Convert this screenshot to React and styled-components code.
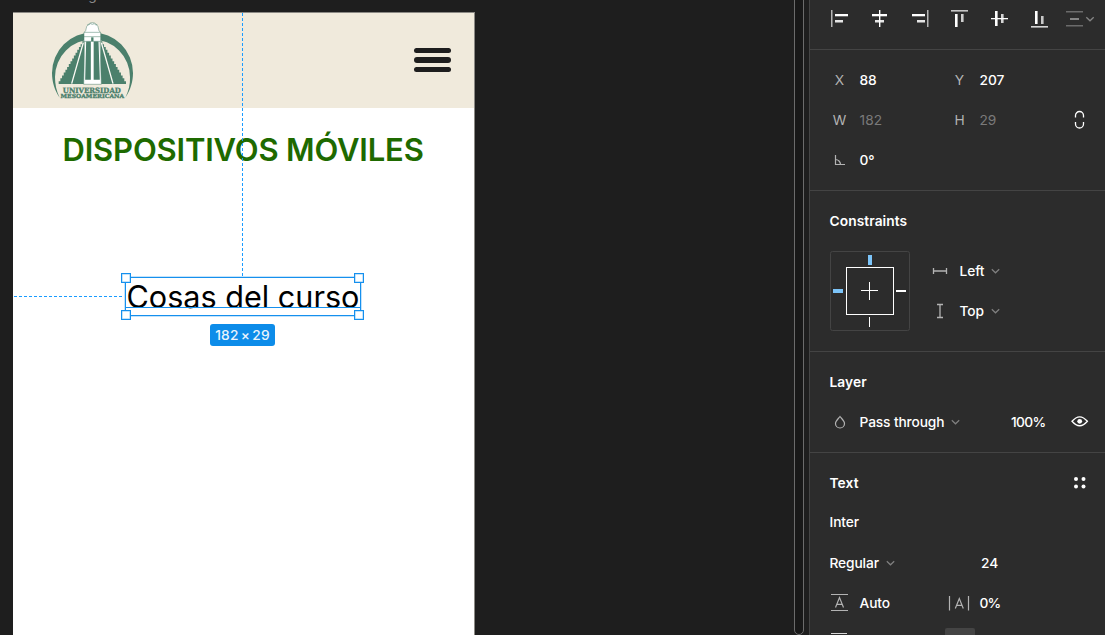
import React from 'react';
import styled, { createGlobalStyle } from 'styled-components';

const GlobalStyle = createGlobalStyle`
  * { box-sizing: border-box; }
  body {
    margin: 0;
    background: #1e1e1e;
    font-family: Inter, "Liberation Sans", sans-serif;
    overflow: hidden;
  }
`;

const Editor = styled.div`
  display: flex;
  width: 1105px;
  height: 635px;
  overflow: hidden;
  background: #1e1e1e;
`;

const Canvas = styled.main`
  position: relative;
  flex: 1;
  overflow: hidden;
`;

const FrameLabel = styled.span`
  position: absolute;
  left: 13px;
  top: -13px;
  font-size: 13.75px;
  line-height: 16px;
  color: #8a8a8a;
  white-space: nowrap;
`;

const Artboard = styled.section`
  position: absolute;
  left: 13px;
  top: 12px;
  width: 462px;
  height: 640px;
  background: #fff;
  border: 1px solid #8b8984;
  border-width: 1px 1px 0 0;
`;

const SiteHeader = styled.header`
  display: flex;
  justify-content: space-between;
  height: 95.4px;
  padding: 7px 23.5px 0 37px;
  background: #f0eadc;
`;

const Hamburger = styled.div`
  display: flex;
  flex-direction: column;
  gap: 4.3px;
  margin-top: 27.7px;
`;

const HamburgerBar = styled.span`
  width: 37px;
  height: 5.4px;
  border-radius: 3px;
  background: #1e1e1e;
`;

const Title = styled.h1`
  margin: 22.6px 0 0;
  padding-left: 49.5px;
  font-size: 31px;
  line-height: 38px;
  font-weight: 600;
  letter-spacing: -0.18px;
  color: #1e6a00;
  white-space: nowrap;
`;

const GuideVertical = styled.div`
  position: absolute;
  left: 242px;
  top: 13px;
  width: 1.4px;
  height: 263px;
  background: repeating-linear-gradient(180deg, #1a9bff 0 3px, transparent 3px 5px);
`;

const GuideHorizontal = styled.div`
  position: absolute;
  left: 14px;
  top: 296px;
  width: 110px;
  height: 1px;
  background: repeating-linear-gradient(90deg, #1a9bff 0 3px, transparent 3px 5px);
`;

const SelectedText = styled.div`
  position: absolute;
  left: 125px;
  top: 277px;
  width: 236px;
  height: 39px;
  padding-left: 0.5px;
  box-shadow: 0 0 0 0.5px #1590ee80;
  border: 1px solid #1590ee;
  font-size: 30.6px;
  line-height: 37px;
  color: #000;
  white-space: nowrap;

  &::after {
    content: '';
    position: absolute;
    left: 0;
    right: 0;
    top: 29px;
    height: 1px;
    background: #1590ee;
  }
`;

const Handle = styled.span`
  position: absolute;
  ${(p) => (p.$right ? 'right: -4px;' : 'left: -5px;')}
  ${(p) => (p.$bottom ? 'bottom: -5px;' : 'top: -5px;')}
  width: 10px;
  height: 10px;
  border: 1px solid #1590ee;
  box-shadow: inset 0 0 0 0.5px #1590ee80;
  background: #fff;
  z-index: 1;
`;

const SizeBadge = styled.div`
  position: absolute;
  left: 210px;
  top: 324px;
  width: 65px;
  height: 21.5px;
  border-radius: 3px;
  background: #0d8ce9;
  color: #e9f4fd;
  font-size: 13.75px;
  font-weight: 500;
  line-height: 22px;
  text-align: center;
  letter-spacing: 0.15px;
  word-spacing: -1.6px;
  white-space: nowrap;
`;

const Scrollbar = styled.div`
  position: absolute;
  left: 794px;
  top: -20px;
  width: 10px;
  height: 655px;
  border: 1px solid #6b6b6b;
  border-radius: 5px;
  background: #181818;
`;

const Panel = styled.aside`
  flex: 0 0 296px;
  border-left: 1px solid #444;
  background: #2c2c2c;
  color: #fff;
  font-size: 13.75px;
  line-height: 20px;
`;

const AlignBar = styled.div`
  display: flex;
  height: 50px;
  padding: 9px 0 0 20px;
  gap: 20px;
  border-bottom: 1px solid #444;
`;

const Section = styled.section`
  padding: 10px 15px ${(p) => p.$bottom ?? 10}px 20px;
  border-bottom: 1px solid #444;
`;

const Row = styled.div`
  display: grid;
  grid-template-columns: 120px 120px 20px;
  align-items: center;
  height: 40px;
`;

const FamilyRow = styled(Row)`
  height: 38px;
  margin-bottom: 2px;
`;

const HeadingRow = styled.div`
  display: flex;
  align-items: center;
  justify-content: space-between;
  height: 40px;
`;

const Heading = styled.h2`
  margin: 0 0 0 -0.5px;
  font-size: 13.75px;
  font-weight: 600;
  letter-spacing: 0.08px;
`;

const Field = styled.div`
  display: flex;
  align-items: center;
  gap: 9.5px;
  padding-left: ${(p) => p.$indent || 0}px;
  white-space: nowrap;
`;

const FieldLabel = styled.span`
  width: 20px;
  text-align: center;
  text-indent: -1px;
  color: #b3b3b3;
`;

const Value = styled.span`
  display: inline-flex;
  align-items: center;
  gap: 7px;
  font-weight: ${(p) => (p.$muted ? 400 : 500)};
  letter-spacing: ${(p) => p.$tracking ?? -0.08}px;
  margin-left: ${(p) => (p.$flush ? -0.5 : 0)}px;
  color: ${(p) => (p.$muted ? '#7a7a7a' : '#fff')};
`;

const Svg = styled.svg`
  display: block;
  flex: none;
  overflow: visible;
`;

const ConstraintArea = styled.div`
  display: flex;
  gap: 20px;
  padding-top: 10px;
`;

const ConstraintFields = styled.div`
  display: flex;
  flex-direction: column;
`;

const ConstraintField = styled(Field)`
  height: 40px;
`;

const AlignmentStrip = styled.div`
  display: flex;
  justify-content: space-between;
  width: 145px;
  padding-top: 5px;
`;

const StripButton = styled.span`
  width: 30px;
  height: 30px;
  border-radius: 2px;
  background: #444;
`;

function Icon({ children, size = 20 }) {
  return (
    <Svg width={size} height={20} viewBox={`0 0 ${size} 20`} fill="none">
      {children}
    </Svg>
  );
}

function Chevron() {
  return (
    <Svg width="9" height="6" viewBox="0 0 9 6" fill="none">
      <path d="M.8 1.300l3.700 3.500 3.700-3.500" stroke="#808080" strokeWidth="1.2" />
    </Svg>
  );
}

/* Bars of each alignment glyph: x, y, width, height, colour */
const alignments = [
  [[1, 1, 1.5, 17, '#b5b5b5'], [5, 5, 13, 2.3, '#fff'], [5, 11, 8, 2.5, '#e5e5e5']],
  [[2, 5, 15, 2.3, '#fff'], [5, 11, 9, 2.5, '#e5e5e5'], [9, 1, 1.4, 17, '#fff']],
  [[17, 1, 1.5, 17, '#b5b5b5'], [2, 5, 13, 2.3, '#fff'], [7, 11, 8, 2.5, '#e5e5e5']],
  [[1, 1, 17, 1.6, '#c5c5c5'], [5, 5, 2.6, 13, '#fff'], [11, 5, 2.6, 8, '#cfcfcf']],
  [[5, 2, 2.6, 15, '#fff'], [11, 5, 2.6, 9, '#d5d5d5'], [1, 9, 17, 1.3, '#fff']],
  [[1, 17, 17, 1.6, '#d5d5d5'], [5, 2, 2.6, 13, '#fff'], [11, 7, 2.6, 8, '#c8c8c8']],
  [[-4, 2, 17, 1.5, '#6b6b6b'], [0, 9, 9, 2, '#858585'], [-4, 16, 17, 1.5, '#6b6b6b']],
];

function AlignIcon({ bars, chevron }) {
  return (
    <Icon>
      {bars.map(([x, y, w, h, c], i) => (
        <rect key={i} x={x} y={y} width={w} height={h} fill={c} />
      ))}
      {chevron && <path d="M16.3 8.200l3.700 3.600 3.700-3.600" stroke="#858585" strokeWidth="1.3" />}
    </Icon>
  );
}

function UniversityLogo() {
  const green = '#4b806c';
  const count = 15;
  const steps = (side) => {
    let d = `M${187 + side * 25} 94`;
    for (let i = 0; i < count; i += 1) {
      d += `h${side * (76 / count)}v${128 / count}`;
    }
    return `${d}H${187 + side * 22}z`;
  };
  return (
    <Svg width="85" height="81.67" viewBox="60 30 255 245">
      <path
        d="M89 263C73 240 66 214 66 189A121.500 121.500 0 0 1 309 189C309 214 302 240 286 263C296 243 301 222 300 201A112.500 112.500 0 0 0 75 201C75 222 79 243 89 263z"
        fill={green}
      />
      <path d={steps(-1)} fill={green} />
      <path d={steps(1)} fill={green} />
      <path d="M160 98L125 221M214 98L249 221" stroke="#fbfaf4" strokeWidth="4" />
      <path d="M164 92h46l4 131h-53z" fill="#fff" stroke={green} strokeWidth="1.5" />
      <path d="M168.500 94h14v115h-17zM191 94h14.500l4 115H191z" fill={green} />
      <path
        d="M162 94V68l5-6q2-15 8-19 4-5 12-5t12 5q6 4 8 19l5 6v26z"
        fill="#fff"
        stroke={green}
        strokeWidth="1.500"
      />
      <path d="M162 67h50M162 80h50M172 44l5 1 4-4 6 2 6-2 4 4 5-1" fill="none" stroke={green} strokeWidth="1.5" />
      <path d="M183.500 82h7v12h-7z" fill={green} />
      <g fill={green} stroke={green} strokeWidth="1" fontFamily="'DejaVu Serif', serif" fontWeight="700">
        <text x="98.500" y="248" fontSize="22" textLength="174" lengthAdjust="spacingAndGlyphs">UNIVERSIDAD</text>
        <text x="91.500" y="265" fontSize="17" textLength="191" lengthAdjust="spacingAndGlyphs">MESOAMERICANA</text>
      </g>
    </Svg>
  );
}

function ConstraintWidget() {
  return (
    <Svg width="80" height="80" viewBox="0 0 80 80" fill="none">
      <rect x=".5" y=".5" width="79" height="79" rx="2" stroke="#444" />
      <rect x="16.500" y="16.500" width="47" height="47" stroke="#fff" />
      <path d="M31 39.500h17M39.500 31v18M39.500 66v10" stroke="#fff" />
      <path d="M66 40h10" stroke="#fff" strokeWidth="2" />
      <path d="M38 4h4v10h-4zM3 38h10v4H3z" fill="#7cc4f8" />
    </Svg>
  );
}

function DesignCanvas() {
  return (
    <Canvas>
      <FrameLabel>Android Large - 1</FrameLabel>
      <Artboard>
        <SiteHeader>
          <UniversityLogo />
          <Hamburger>
            <HamburgerBar />
            <HamburgerBar />
            <HamburgerBar />
          </Hamburger>
        </SiteHeader>
        <Title>DISPOSITIVOS MÓVILES</Title>
      </Artboard>
      <GuideVertical />
      <GuideHorizontal />
      <SelectedText>
        Cosas del curso
        <Handle />
        <Handle $right />
        <Handle $bottom />
        <Handle $right $bottom />
      </SelectedText>
      <SizeBadge>182 × 29</SizeBadge>
      <Scrollbar />
    </Canvas>
  );
}

export default function App() {
  return (
    <>
      <GlobalStyle />
      <Editor>
        <DesignCanvas />
        <Panel>
          <AlignBar>
            {alignments.map((bars, i) => (
              <AlignIcon key={i} bars={bars} chevron={i === 6} />
            ))}
          </AlignBar>

          <Section>
            <Row>
              <Field><FieldLabel>X</FieldLabel><Value>88</Value></Field>
              <Field><FieldLabel>Y</FieldLabel><Value>207</Value></Field>
            </Row>
            <Row>
              <Field><FieldLabel>W</FieldLabel><Value $muted $tracking={0.1}>182</Value></Field>
              <Field><FieldLabel>H</FieldLabel><Value $muted>29</Value></Field>
              <Icon>
                <path d="M5.500 7.500V5.500a4 4 0 0 1 8 0V7.500M5.500 12v2a4 4 0 0 0 8 0V12" stroke="#fff" strokeWidth="1.300" />
              </Icon>
            </Row>
            <Row>
              <Field>
                <Icon>
                  <path d="M5.500 5v9.500H15M5.500 9.500a5 5 0 0 1 5 5" stroke="#b3b3b3" strokeWidth="1.200" />
                </Icon>
                <Value>0°</Value>
              </Field>
            </Row>
          </Section>

          <Section $bottom={20}>
            <HeadingRow><Heading>Constraints</Heading></HeadingRow>
            <ConstraintArea>
              <ConstraintWidget />
              <ConstraintFields>
                <ConstraintField>
                  <Icon><path d="M3.500 7v6M16.500 7v6M3.500 10h13" stroke="#b3b3b3" strokeWidth="1.300" /></Icon>
                  <Value>Left <Chevron /></Value>
                </ConstraintField>
                <ConstraintField>
                  <Icon><path d="M7 3.500h6M7 16.500h6M10 3.500v13" stroke="#b3b3b3" strokeWidth="1.300" /></Icon>
                  <Value>Top <Chevron /></Value>
                </ConstraintField>
              </ConstraintFields>
            </ConstraintArea>
          </Section>

          <Section>
            <HeadingRow><Heading>Layer</Heading></HeadingRow>
            <Row>
              <Field>
                <Icon>
                  <path d="M10 4.500C8 7 5.500 9 5.500 11.500a4.500 4.500 0 0 0 9 0C14.500 9 12 7 10 4.500z" stroke="#b3b3b3" strokeWidth="1.200" />
                </Icon>
                <Value $tracking={-0.13}>Pass through <Chevron /></Value>
              </Field>
              <Field $indent={61}><Value $tracking={-0.65}>100%</Value></Field>
              <Icon>
                <path d="M2 9.300Q9.700 .4 17.400 9.300 9.700 18.200 2 9.300z" stroke="#fff" strokeWidth="1.300" />
                <circle cx="9.700" cy="9.300" r="2.400" fill="#fff" />
              </Icon>
            </Row>
          </Section>

          <Section>
            <HeadingRow>
              <Heading>Text</Heading>
              <Icon>
                <g fill="#fff">
                  <circle cx="6" cy="6" r="2" />
                  <circle cx="13.500" cy="6" r="2" />
                  <circle cx="6" cy="13.500" r="2" />
                  <circle cx="13.500" cy="13.500" r="2" />
                </g>
              </Icon>
            </HeadingRow>
            <FamilyRow><Value $flush>Inter</Value></FamilyRow>
            <Row>
              <Value $flush $tracking={-0.12}>Regular <Chevron /></Value>
              <Field $indent={31}><Value>24</Value></Field>
            </Row>
            <Row>
              <Field>
                <Icon>
                  <path d="M1 1.500h17M1 17.500h17" stroke="#b3b3b3" strokeWidth="1.200" />
                  <path d="M5.500 14.500l4-10 4 10M6.800 11.300h5.400" stroke="#b3b3b3" strokeWidth="1.200" />
                </Icon>
                <Value>Auto</Value>
              </Field>
              <Field>
                <Icon>
                  <path d="M-.5 3v14.500M18.500 3v14.500M5.300 15.500l4-10 4 10M6.600 12.300h5.400" stroke="#b3b3b3" strokeWidth="1.200" />
                </Icon>
                <Value $tracking={-0.9}>0%</Value>
              </Field>
            </Row>
            <AlignmentStrip>
              <Icon>
                <path d="M1 5.500h16M1 10h12M1 14.500h16" stroke="#d8d8d8" strokeWidth="1.200" />
              </Icon>
              <StripButton />
            </AlignmentStrip>
          </Section>
        </Panel>
      </Editor>
    </>
  );
}
